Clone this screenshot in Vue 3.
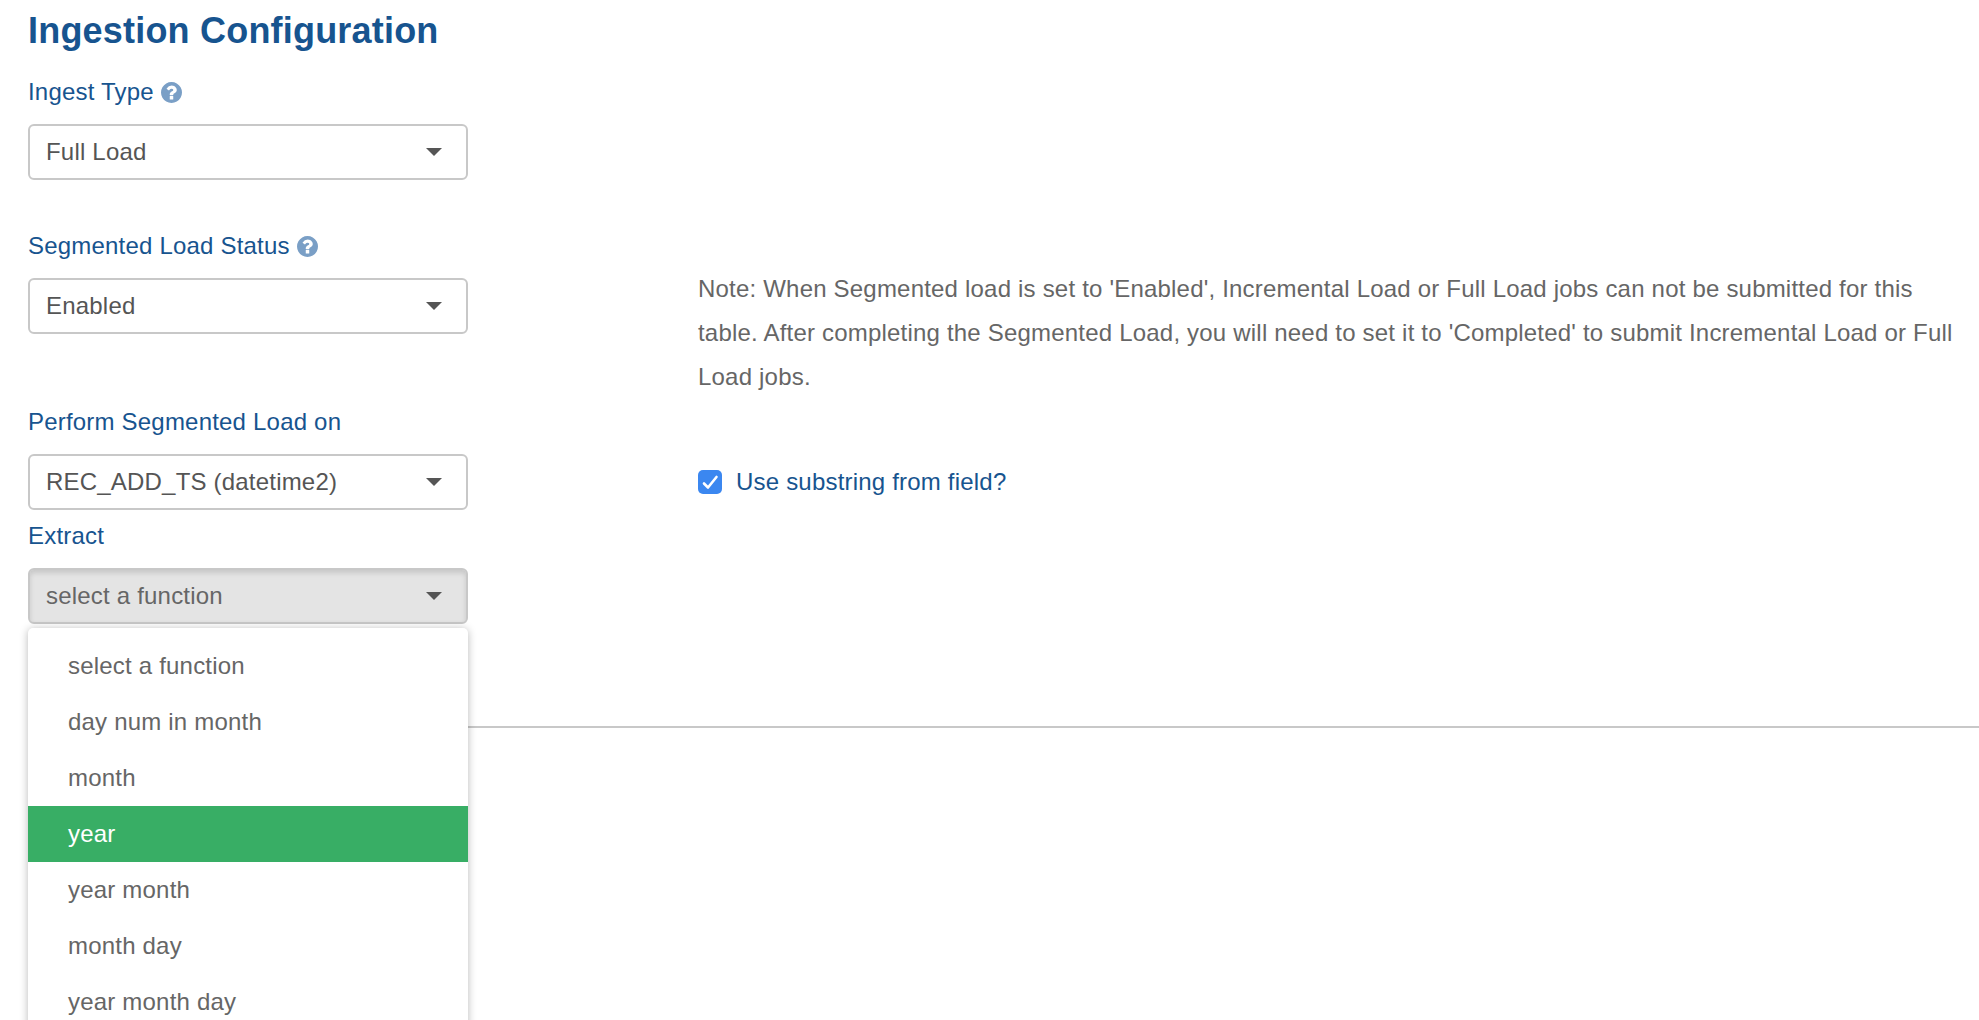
<script setup>
const helpPath = "M1024 1376v-192q0-14-9-23t-23-9H800q-14 0-23 9t-9 23v192q0 14 9 23t23 9h192q14 0 23-9t9-23zm256-672q0-88-55.5-163T1086 425t-170-41q-243 0-371 213-15 24 8 42l132 100q7 6 19 6 16 0 25-12 53-68 86-92 34-24 86-24 48 0 85.500 26t37.500 59q0 38-20 61t-68 45q-63 28-115.500 86.500T768 1020v36q0 14 9 23t23 9h192q14 0 23-9t9-23q0-19 21.500-49.500T1100 957q32-18 49-28.500t46-35 44.500-48 28-60.500 12.500-81zm384 192q0 209-103 385.500T1281.500 1561 896 1664t-385.500-103T231 1281.500 128 896t103-385.500T510.500 231 896 128t385.500 103T1561 510.500 1664 896z"
const options = ['select a function', 'day num in month', 'month', 'year', 'year month', 'month day', 'year month day']
</script>

<template>
  <div class="page">
    <h1 class="title">Ingestion Configuration</h1>

    <div class="field first">
      <label class="label">Ingest Type
        <svg class="help" viewBox="128 128 1536 1536"><path :d="helpPath" /></svg>
      </label>
      <div class="select"><span>Full Load</span><i class="caret"></i></div>
    </div>

    <div class="row status-row">
      <div class="field">
        <label class="label">Segmented Load Status
          <svg class="help" viewBox="128 128 1536 1536"><path :d="helpPath" /></svg>
        </label>
        <div class="select"><span>Enabled</span><i class="caret"></i></div>
      </div>
      <p class="note">Note: When Segmented load is set to 'Enabled', Incremental Load or Full Load jobs can not be submitted for this table. After completing the Segmented Load, you will need to set it to 'Completed' to submit Incremental Load or Full Load jobs.</p>
    </div>

    <div class="row">
      <div class="field">
        <label class="label">Perform Segmented Load on</label>
        <div class="select"><span>REC_ADD_TS (datetime2)</span><i class="caret"></i></div>
      </div>
      <div class="check-row">
        <span class="checkbox">
          <svg viewBox="0 0 24 24"><path d="M6 13.500l4 4L18.500 7" /></svg>
        </span>
        <span class="check-label">Use substring from field?</span>
      </div>
    </div>

    <div class="field extract">
      <label class="label">Extract</label>
      <div class="select open"><span>select a function</span><i class="caret"></i></div>
      <ul class="menu">
        <li v-for="o in options" :key="o" :class="{ active: o === 'year' }">{{ o }}</li>
      </ul>
    </div>

    <hr class="rule" />
  </div>
</template>

<style scoped>
.page {
  box-sizing: border-box;
  height: 1020px;
  overflow: hidden;
  padding: 9px 0 0 28px;
  font-family: "Liberation Sans", Arial, sans-serif;
  font-size: 24px;
  letter-spacing: 0.2px;
  background: #fff;
}
.title {
  margin: 0 0 21px;
  font-size: 36px;
  line-height: 44px;
  font-weight: 700;
  color: #17548f;
}
.field {
  width: 440px;
  flex: none;
  position: relative;
}
.first {
  margin-bottom: 48px;
}
.label {
  display: flex;
  align-items: center;
  gap: 7px;
  height: 36px;
  margin-bottom: 14px;
  line-height: 36px;
  color: #17548f;
}
.help {
  width: 21px;
  height: 21px;
  fill: #7a9fc6;
}
.select {
  box-sizing: border-box;
  height: 56px;
  display: flex;
  align-items: center;
  justify-content: space-between;
  padding: 0 24px 0 16px;
  border: 2px solid #c8c8c8;
  border-radius: 6px;
  color: #555;
  background: #fff;
}
.select.open {
  background: #e4e4e4;
  color: #666;
  box-shadow: inset 0 3px 5px rgba(0, 0, 0, 0.125);
}
.caret {
  width: 0;
  height: 0;
  border-left: 8px solid transparent;
  border-right: 8px solid transparent;
  border-top: 8px solid #555;
}
.row {
  display: flex;
  gap: 230px;
}
.status-row {
  min-height: 176px;
}
.note {
  margin: 39px 0 0;
  flex: 1;
  min-width: 0;
  line-height: 44px;
  color: #666;
}
.check-row {
  display: flex;
  align-items: center;
  gap: 14px;
  height: 56px;
  margin-top: 50px;
}
.checkbox {
  width: 24px;
  height: 24px;
  border-radius: 5px;
  background: #3b87f0;
  display: block;
}
.checkbox svg {
  display: block;
  width: 24px;
  height: 24px;
  fill: none;
  stroke: #fff;
  stroke-width: 2.6;
  stroke-linecap: round;
  stroke-linejoin: round;
}
.check-label {
  color: #17548f;
}
.extract {
  margin-top: 8px;
}
.menu {
  position: absolute;
  top: 110px;
  left: 0;
  width: 440px;
  z-index: 2;
  box-sizing: border-box;
  margin: 0;
  padding: 10px 0;
  list-style: none;
  background: #fff;
  border-radius: 5px;
  box-shadow: 0 1px 8px rgba(0, 0, 0, 0.28);
}
.menu li {
  height: 56px;
  line-height: 56px;
  padding-left: 40px;
  color: #666;
}
.menu li.active {
  background: #38ae65;
  color: #fff;
}
.rule {
  margin: 102px 0 0;
  border: 0;
  height: 2px;
  background: #c8c8c8;
}
</style>
